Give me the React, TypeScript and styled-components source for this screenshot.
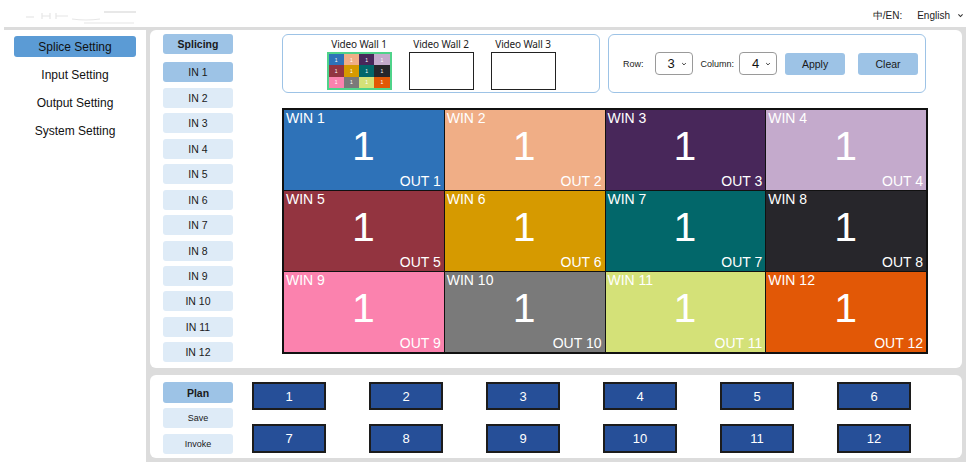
import React, { useState } from 'react';
import styled, { createGlobalStyle } from 'styled-components';

const GlobalStyle = createGlobalStyle`
  html, body {
    margin: 0;
    padding: 0;
    background: #fff;
    font-family: "Liberation Sans", Arial, sans-serif;
    color: #111;
  }
  * { box-sizing: border-box; }
`;

const Page = styled.div`
  width: 973px;
  height: 468px;
  overflow: hidden;
`;

const Header = styled.div`
  height: 27px;
  display: flex;
  align-items: center;
  justify-content: space-between;
  padding: 0 9px 0 24px;
`;

const LangBox = styled.div`
  display: flex;
  align-items: center;
  gap: 15px;
  font-size: 10px;
  color: #222;
  padding-top: 4px;
`;

const LangSelect = styled.div`
  display: flex;
  align-items: center;
  gap: 7px;
`;

const Body = styled.div`
  display: flex;
  margin-left: 4px;
  width: 962px;
  height: 435px;
  border-top: 3px solid #dcdcdc;
`;

const Sidebar = styled.div`
  width: 142px;
  background: #fff;
  padding: 6px 10px 0 10px;
  display: flex;
  flex-direction: column;
  gap: 7px;
`;

const MenuItem = styled.div<{ $active?: boolean }>`
  height: 21px;
  border-radius: 3px;
  display: flex;
  align-items: center;
  justify-content: center;
  font-size: 12px;
  color: #111;
  background: ${p => (p.$active ? '#5b9bd5' : 'transparent')};
`;

const Main = styled.div`
  flex: 1;
  background: #dcdcdc;
  padding: 0 4px 4px 4px;
  display: flex;
  flex-direction: column;
  gap: 7px;
`;

const Panel = styled.div<{ $h: number }>`
  height: ${p => p.$h}px;
  background: #fff;
  border-radius: 6px;
  display: flex;
  padding-left: 13px;
`;

const ButtonColumn = styled.div<{ $top: number }>`
  width: 70px;
  padding-top: ${p => p.$top}px;
  display: flex;
  flex-direction: column;
  gap: 5.45px;
`;

const SideBtn = styled.div<{ $active?: boolean; $bold?: boolean; $size?: number; $h?: number }>`
  height: ${p => p.$h ?? 20}px;
  border-radius: 3px;
  display: flex;
  align-items: center;
  justify-content: center;
  font-size: ${p => p.$size ?? 10.5}px;
  font-weight: ${p => (p.$bold ? 700 : 400)};
  color: #1a1a1a;
  background: ${p => (p.$active ? '#9dc3e6' : '#deebf7')};
`;

const HeadBtn = styled(SideBtn)`
  margin-bottom: 3px;
`;

const WorkArea = styled.div`
  margin-left: 49px;
  width: 646px;
  padding-top: 4px;
  display: flex;
  flex-direction: column;
  gap: 15px;
`;

const TopRow = styled.div`
  display: flex;
  gap: 8px;
  height: 59px;
`;

const BluePanel = styled.div`
  width: 318px;
  flex: none;
  border: 1.5px solid #9dc3e6;
  border-radius: 6px;
  display: flex;
  align-items: center;
`;

const WallList = styled(BluePanel)`
  justify-content: center;
  gap: 17px;
  padding-top: 1px;
`;

const WallItem = styled.div`
  display: flex;
  flex-direction: column;
  align-items: center;
  gap: 2px;
`;

const WallLabel = styled.div`
  font-family: "Noto Sans", "Open Sans", sans-serif;
  font-size: 10px;
  letter-spacing: -0.15px;
  color: #222;
  line-height: 12px;
`;

const WallThumb = styled.div<{ $selected?: boolean }>`
  width: 65px;
  height: 38px;
  border: ${p => (p.$selected ? '2px solid #4fd38a' : '1.3px solid #222')};
  background: #fff;
  display: grid;
  grid-template-columns: repeat(4, 1fr);
  grid-template-rows: repeat(3, 1fr);
`;

const MiniCell = styled.div<{ $bg: string }>`
  background: ${p => p.$bg};
  color: #fff;
  font-size: 5px;
  display: flex;
  align-items: center;
  justify-content: center;
`;

const Controls = styled(BluePanel)`
  padding-left: 14px;
  font-size: 9px;
  color: #222;
`;

const SelectBox = styled.div<{ $ml: number }>`
  margin-left: ${p => p.$ml}px;
  width: 38px;
  height: 23px;
  border: 1px solid #9a9a9a;
  border-radius: 4px;
  display: flex;
  align-items: center;
  justify-content: space-between;
  padding: 0 5px 0 12px;
  font-size: 13px;
  color: #111;
`;

const ActionBtn = styled.div<{ $ml: number }>`
  margin-left: ${p => p.$ml}px;
  width: 60px;
  height: 22px;
  border-radius: 3px;
  background: #9dc3e6;
  display: flex;
  align-items: center;
  justify-content: center;
  font-size: 10.5px;
  color: #1a1a1a;
`;

const Label = styled.span<{ $ml?: number }>`
  margin-left: ${p => p.$ml ?? 0}px;
`;

const WinGrid = styled.div`
  width: 646px;
  height: 246px;
  border: 2px solid #111;
  background: #111;
  display: grid;
  grid-template-columns: repeat(4, 1fr);
  grid-template-rows: repeat(3, 1fr);
  gap: 1px;
`;

const WinCell = styled.div<{ $bg: string }>`
  background: ${p => p.$bg};
  color: #fff;
  display: flex;
  flex-direction: column;
  padding: 0 3px 1px 2px;
`;

const WinName = styled.div`
  font-size: 14px;
  line-height: 16px;
`;

const WinNum = styled.div`
  flex: 1;
  display: flex;
  align-items: center;
  justify-content: center;
  font-size: 41px;
  line-height: 41px;
  margin-top: -6px;
`;

const WinOut = styled.div`
  font-size: 14px;
  line-height: 16px;
  text-align: right;
`;

const PlanGrid = styled.div`
  margin-left: 19px;
  padding-top: 7px;
  display: grid;
  grid-template-columns: repeat(6, 74px);
  grid-template-rows: 28px 29px;
  column-gap: 43px;
  row-gap: 14px;
`;

const PlanBtn = styled.div`
  background: #264f98;
  border: 2px solid #1c1c1c;
  color: #fff;
  font-size: 13px;
  display: flex;
  align-items: center;
  justify-content: center;
`;

const Chevron = ({ size = 7 }: { size?: number }) => (
  <svg width={size} height={size} viewBox="0 0 10 10">
    <path d="M2 3.5 L5 6.5 L8 3.5" stroke="#333" strokeWidth="1.6" fill="none" />
  </svg>
);

const Logo = () => (
  <svg width="120" height="22" viewBox="0 0 120 22">
    <g stroke="#e4e4e4" strokeWidth="1.2" fill="none" opacity="0.9">
      <path d="M2 14 H10" />
      <path d="M18 10 V16 M18 13 H26 M26 10 V16" />
      <path d="M32 13 H44 M32 10 V16" />
      <path d="M48 16 Q62 18 76 16" />
      <path d="M80 9 H112" strokeWidth="1.8" />
      <path d="M60 20 H110" />
    </g>
  </svg>
);

const colors = [
  '#2e72b8', '#f0ae86', '#48275a', '#c4aacc',
  '#933440', '#d69a00', '#02676a', '#27262b',
  '#fb82ae', '#7a7a7a', '#d4e178', '#e25806',
];

const App: React.FC = () => {
  const [menu] = useState('Splice Setting');
  const [input] = useState(1);
  const menus = ['Splice Setting', 'Input Setting', 'Output Setting', 'System Setting'];

  return (
    <Page>
      <GlobalStyle />
      <Header>
        <Logo />
        <LangBox>
          <span>中/EN:</span>
          <LangSelect>
            English <Chevron />
          </LangSelect>
        </LangBox>
      </Header>
      <Body>
        <Sidebar>
          {menus.map(m => (
            <MenuItem key={m} $active={m === menu}>{m}</MenuItem>
          ))}
        </Sidebar>
        <Main>
          <Panel $h={338}>
            <ButtonColumn $top={4}>
              <HeadBtn $active $bold>Splicing</HeadBtn>
              {Array.from({ length: 12 }, (_, i) => (
                <SideBtn key={i} $active={i + 1 === input}>IN {i + 1}</SideBtn>
              ))}
            </ButtonColumn>
            <WorkArea>
              <TopRow>
                <WallList>
                  {[1, 2, 3].map(n => (
                    <WallItem key={n}>
                      <WallLabel>Video Wall {n}</WallLabel>
                      <WallThumb $selected={n === 1}>
                        {n === 1 &&
                          colors.map((c, i) => (
                            <MiniCell key={i} $bg={c}>1</MiniCell>
                          ))}
                      </WallThumb>
                    </WallItem>
                  ))}
                </WallList>
                <Controls>
                  <Label>Row:</Label>
                  <SelectBox $ml={11}>3 <Chevron size={6} /></SelectBox>
                  <Label $ml={8}>Column:</Label>
                  <SelectBox $ml={5}>4 <Chevron size={6} /></SelectBox>
                  <ActionBtn $ml={8}>Apply</ActionBtn>
                  <ActionBtn $ml={13}>Clear</ActionBtn>
                </Controls>
              </TopRow>
              <WinGrid>
                {colors.map((c, i) => (
                  <WinCell key={i} $bg={c}>
                    <WinName>WIN {i + 1}</WinName>
                    <WinNum>1</WinNum>
                    <WinOut>OUT {i + 1}</WinOut>
                  </WinCell>
                ))}
              </WinGrid>
            </WorkArea>
          </Panel>
          <Panel $h={83}>
            <ButtonColumn $top={7}>
              <SideBtn $active $bold $h={21}>Plan</SideBtn>
              <SideBtn $size={9}>Save</SideBtn>
              <SideBtn $size={9}>Invoke</SideBtn>
            </ButtonColumn>
            <PlanGrid>
              {Array.from({ length: 12 }, (_, i) => (
                <PlanBtn key={i}>{i + 1}</PlanBtn>
              ))}
            </PlanGrid>
          </Panel>
        </Main>
      </Body>
    </Page>
  );
};

export default App;
